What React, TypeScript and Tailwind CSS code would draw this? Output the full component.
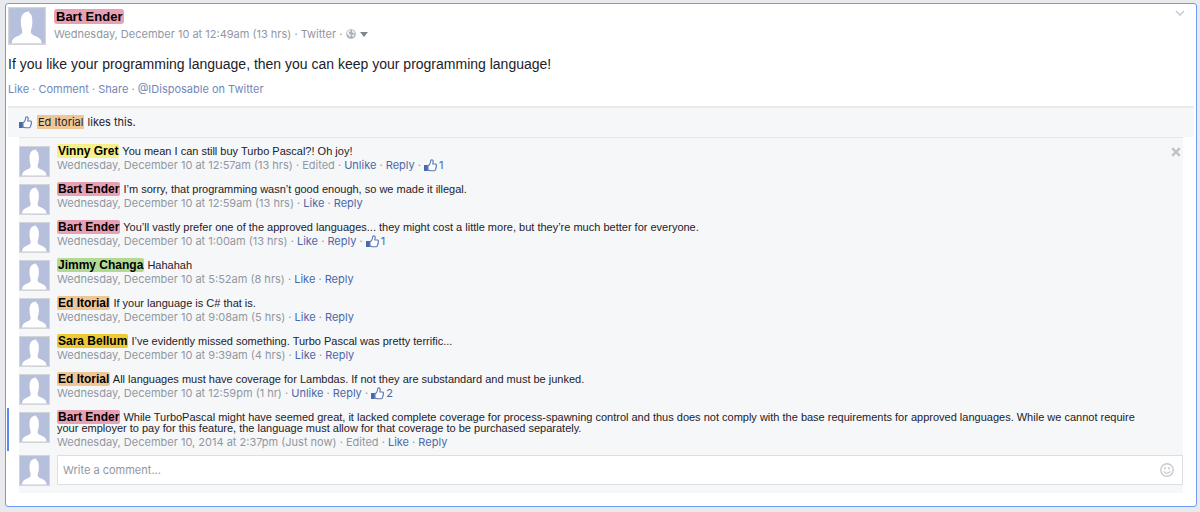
import { Fragment, type ReactNode } from "react";

type Person = { name: string; highlight: string };

const bart: Person = { name: "Bart Ender", highlight: "bg-[#e8a0b4]" };
const vinny: Person = { name: "Vinny Gret", highlight: "bg-[#f5f08a]" };
const jimmy: Person = { name: "Jimmy Changa", highlight: "bg-[#b3da92]" };
const ed: Person = { name: "Ed Itorial", highlight: "bg-[#efc797]" };
const sara: Person = { name: "Sara Bellum", highlight: "bg-[#edcb35]" };

type CommentData = {
  author: Person;
  text: string;
  time: string;
  edited?: boolean;
  liked?: boolean;
  likes?: number;
  unread?: boolean;
};

const comments: CommentData[] = [
  { author: vinny, text: "You mean I can still buy Turbo Pascal?! Oh joy!", time: "Wednesday, December 10 at 12:57am (13 hrs)", edited: true, liked: true, likes: 1 },
  { author: bart, text: "I’m sorry, that programming wasn’t good enough, so we made it illegal.", time: "Wednesday, December 10 at 12:59am (13 hrs)" },
  { author: bart, text: "You’ll vastly prefer one of the approved languages... they might cost a little more, but they’re much better for everyone.", time: "Wednesday, December 10 at 1:00am (13 hrs)", likes: 1 },
  { author: jimmy, text: "Hahahah", time: "Wednesday, December 10 at 5:52am (8 hrs)" },
  { author: ed, text: "If your language is C# that is.", time: "Wednesday, December 10 at 9:08am (5 hrs)" },
  { author: sara, text: "I’ve evidently missed something. Turbo Pascal was pretty terrific...", time: "Wednesday, December 10 at 9:39am (4 hrs)" },
  { author: ed, text: "All languages must have coverage for Lambdas. If not they are substandard and must be junked.", time: "Wednesday, December 10 at 12:59pm (1 hr)", liked: true, likes: 2 },
  { author: bart, text: "While TurboPascal might have seemed great, it lacked complete coverage for process-spawning control and thus does not comply with the base requirements for approved languages. While we cannot require your employer to pay for this feature, the language must allow for that coverage to be purchased separately.", time: "Wednesday, December 10, 2014 at 2:37pm (Just now)", edited: true, unread: true },
];

function Avatar({ large = false }: { large?: boolean }) {
  return (
    <svg
      viewBox="0 0 31 31"
      className={large ? "size-[38px] shrink-0" : "size-[31px] shrink-0"}
      aria-hidden="true"
    >
      <rect width="31" height="31" fill="#d3d5d8" />
      <rect x="1" y="1" width="29" height="28.6" fill="#b6bfdc" />
      <path
        d="M3 29.600c.2-3 1.500-4.300 4-5.500 2.300-1 4.200-1.600 4.600-3.300.2-1 0-2-.4-3-.5-1.600-.7-3.500-.7-5.300 0-4.500 1-7.600 4-8.300 1-.5 2.100-.8 2.800-.4-.2.500 0 .8.300 1.100 1.700 1 2.300 3.800 2.300 7.300 0 2-.3 3.900-.8 5.600-.4 1-.6 2-.4 3 .4 1.700 2.300 2.300 4.600 3.300 2.500 1.200 4 2.500 4.200 5.500z"
        fill="#fff"
      />
    </svg>
  );
}

function Thumb() {
  return (
    <svg viewBox="0 0 13 13" className="h-[13px] w-[13px] shrink-0" aria-hidden="true">
      <path
        d="M4 6.700C5.600 6 6.600 4.500 6.800 1.200c1-.8 2.600-.1 2.400 1.500L8.700 5h2.600c1.300 0 1.500 1.300.8 1.900.5.600.3 1.400-.3 1.700.3.600.1 1.300-.5 1.600.2.800-.2 1.600-1.100 1.600H6.400L4 11.100z"
        fill="#fff"
        stroke="#5b78b6"
        strokeWidth="1.100"
        strokeLinejoin="round"
      />
      <rect x="0" y="6" width="3.800" height="6" fill="#4a69ad" />
    </svg>
  );
}

function Globe() {
  return (
    <svg viewBox="0 0 10 10" className="size-[10px]" aria-hidden="true">
      <circle cx="5" cy="5" r="4.800" fill="#a9afb8" />
      <path d="M1 3.200 2.800 1l2 .3-.6 1.500-1.300.7.300 1.200 1.500.6.300 1.200-1.200 2-.8-1.800L1 5.200zM6.300 1l1.500.8 1.200 2-.8.600-1.600-.7-.7-1.200zM6.800 5.300l1.700.3-.8 2-1.200.6-.4-1.600z" fill="#eef0f2" />
    </svg>
  );
}

function Dotted({ items }: { items: ReactNode[] }) {
  return (
    <>
      {items.map((item, i) => (
        <Fragment key={i}>
          {i > 0 && <span className="text-[#9197a3]"> · </span>}
          {item}
        </Fragment>
      ))}
    </>
  );
}

function Action({ children }: { children: ReactNode }) {
  return (
    <button type="button" className="cursor-pointer text-[#4b67a8] hover:underline">
      {children}
    </button>
  );
}

function Comment({ author, text, time, edited, liked, likes, unread }: CommentData) {
  const items: ReactNode[] = [<span>{time}</span>];
  if (edited) items.push(<span>Edited</span>);
  items.push(<Action>{liked ? "Unlike" : "Like"}</Action>, <Action>Reply</Action>);
  if (likes) {
    items.push(
      <button type="button" className="inline-flex h-[14px] items-center gap-[2px] align-top text-[#4b67a8]" aria-label={`${likes} likes`}>
        <Thumb />
        {likes}
      </button>,
    );
  }
  return (
    <li className="relative flex gap-[7px]">
      {unread && <span className="absolute -left-3 -top-1 h-[43px] w-[2px] bg-[#5a8bee]" />}
      <Avatar />
      <div className="min-w-0 flex-1 pr-8">
        <p className="font-['Liberation_Sans',Arial,sans-serif] text-[11px] leading-[11px] text-[#1d2129]">
          <a href="#" className={`rounded-[2px] px-[1px] text-[12px] font-bold text-black ${author.highlight}`}>
            {author.name}
          </a>{" "}
          {text}
        </p>
        <p className="pt-px text-[11px] leading-[14px] text-[#9197a3]">
          <Dotted items={items} />
        </p>
      </div>
    </li>
  );
}

export default function App() {
  return (
    <div className="min-h-screen bg-[#e9eaed] pb-[5px] pl-[5px] pr-[3px] pt-[3px] font-[Inter,'Liberation_Sans',Arial,sans-serif]">
      <article className="rounded-[3px] border border-[#6f9cf3] bg-white px-[2px] pb-[13px] pt-[3px]">
        <header className="flex items-start gap-2">
          <Avatar large />
          <div className="min-w-0 flex-1 pt-px">
            <h1 className="font-['Liberation_Sans',Arial,sans-serif] text-[13px] leading-[17px]">
              <a href="#" className={`rounded-[3px] px-[2px] font-bold text-black ${bart.highlight}`}>
                {bart.name}
              </a>
            </h1>
            <div className="flex items-center gap-1 text-[11px] leading-[18px] text-[#9197a3]">
              <span>Wednesday, December 10 at 12:49am (13 hrs) · Twitter ·</span>
              <button type="button" aria-label="Audience" className="flex items-center gap-1">
                <Globe />
                <svg viewBox="0 0 8 5" className="h-[5px] w-2" aria-hidden="true">
                  <path d="M0 0h8L4 5z" fill="#7f8590" />
                </svg>
              </button>
            </div>
          </div>
          <button type="button" aria-label="Post options" className="mr-[9px] mt-[3px]">
            <svg viewBox="0 0 10 7" className="h-[7px] w-[10px]" aria-hidden="true">
              <path d="M1 1l4 4 4-4" fill="none" stroke="#c9ccd4" strokeWidth="1.700" />
            </svg>
          </button>
        </header>

        <p className="pt-[10px] font-['Liberation_Sans',Arial,sans-serif] text-[14px] leading-[18px] text-[#1d2129]">
          If you like your programming language, then you can keep your programming language!
        </p>
        <div className="pb-[9px] pt-2 text-[11px] leading-[16px] text-[#7287b9]">
          <Dotted
            items={[
              <button type="button">Like</button>,
              <button type="button">Comment</button>,
              <button type="button">Share</button>,
              <a href="#">@IDisposable on Twitter</a>,
            ]}
          />
        </div>

        <section>
          <div className="flex h-[31px] items-center gap-[5px] border-t-2 border-[#e9eaed] bg-[#f6f7f8] pb-px pl-[11px] text-[11px] leading-[14px] text-[#1d2129]">
            <Thumb />
            <p>
              <a href="#" className={`px-[1px] ${ed.highlight}`}>{ed.name}</a> likes this.
            </p>
          </div>
          <div className="ml-[11px] mr-[11px] border-t border-[#e5e6ea] bg-[#f6f7f8] pb-[7px] pt-2">
            <div className="relative">
              <ul className="flex flex-col gap-[7px]">
                {comments.map((comment) => (
                  <Comment key={comment.time} {...comment} />
                ))}
              </ul>
              <button type="button" aria-label="Remove comment" className="absolute right-[2px] top-[1px]">
                <svg viewBox="0 0 10 10" className="size-[10px]" aria-hidden="true">
                  <path d="M1.200 1.200l7.600 7.600M8.800 1.200L1.200 8.800" stroke="#bfc2ca" strokeWidth="2.400" />
                </svg>
              </button>
            </div>
            <form className="flex gap-[7px] pt-[6px]">
              <Avatar />
              <div className="flex h-[30px] flex-1 items-center border border-[#dcdee3] bg-white pl-[5px] pr-2">
                <input
                  type="text"
                  aria-label="Write a comment"
                  placeholder="Write a comment..."
                  className="min-w-0 flex-1 text-[11px] leading-[16px] outline-none placeholder:text-[#9197a3]"
                />
                <button type="button" aria-label="Insert emoji">
                  <svg viewBox="0 0 14 14" className="size-[14px]" fill="none" stroke="#c8cacf" aria-hidden="true">
                    <circle cx="7" cy="7" r="6.200" strokeWidth="1.400" />
                    <path d="M5 4v2.500M9 4v2.500" strokeWidth="1.500" />
                    <path d="M3.800 8.300c1 2.700 5.400 2.700 6.400 0" strokeWidth="1.400" />
                  </svg>
                </button>
              </div>
            </form>
          </div>
        </section>
      </article>
    </div>
  );
}
